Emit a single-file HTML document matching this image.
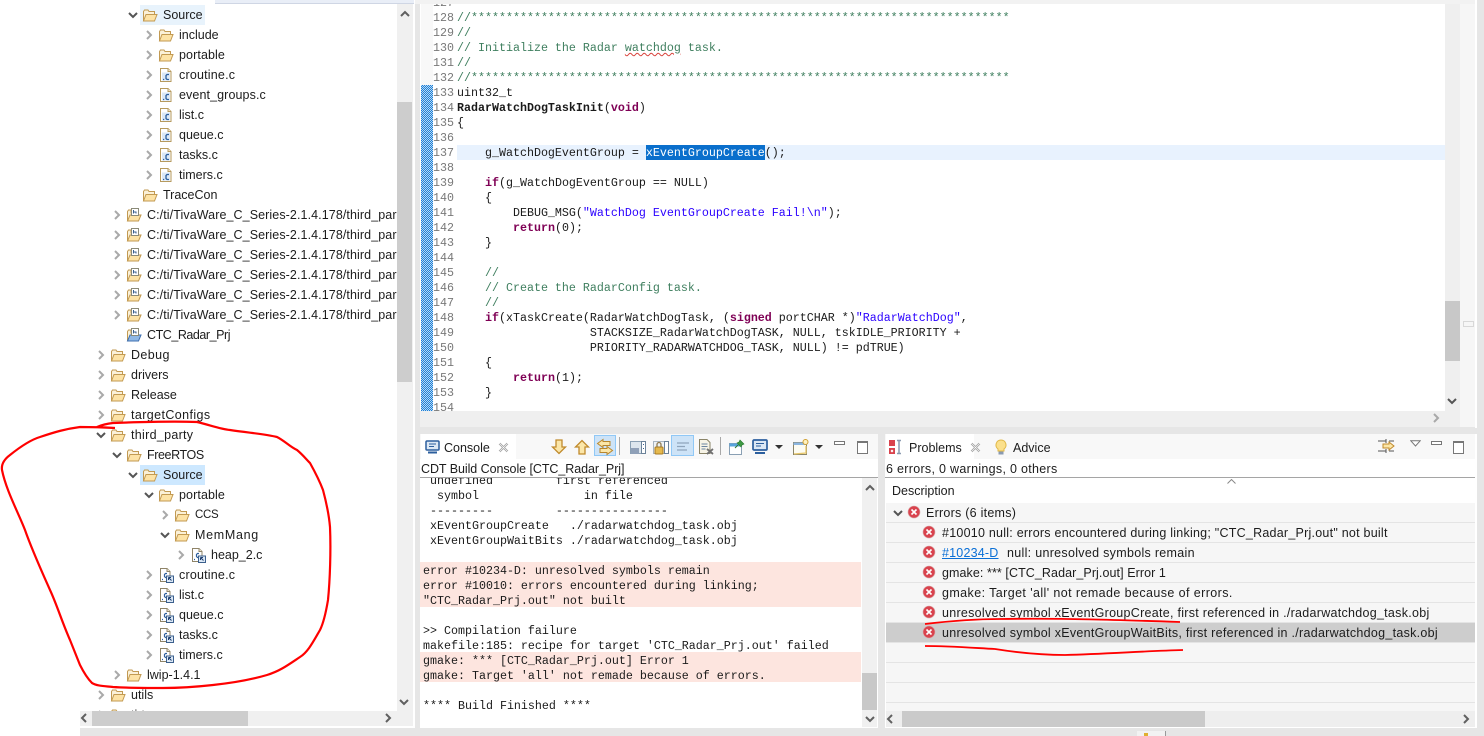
<!DOCTYPE html>
<html><head><meta charset="utf-8"><style>
html,body{margin:0;padding:0;width:1484px;height:736px;overflow:hidden;background:#fff}
body{position:relative;font-family:"Liberation Sans","Noto Sans CJK SC",sans-serif;font-size:12.5px;color:#1c1c1c}
.a{position:absolute}
.r{position:absolute;height:20px;line-height:20px;white-space:nowrap}
.r svg{position:absolute}
.r .c{left:-5px;top:5px;width:10px;height:10px}
.r .i{left:9px;top:2px;width:16px;height:16px}
.r span{position:absolute;left:30px;top:0}
pre{margin:0;font-family:"Liberation Mono",monospace;font-size:11.67px;line-height:15px;position:absolute;color:#1a1a1a}
.g{color:#3f7f5f}.k{color:#7f0055;font-weight:bold}.s{color:#2a00ff}
.row{position:absolute;left:886px;width:589px;height:20px;line-height:21px;white-space:nowrap;border-bottom:1px solid #e4e4e4;box-sizing:border-box;background:#f6f6f6}
.row svg{position:absolute;left:36px;top:2px;width:14px;height:14px}
.row span{position:absolute;left:56px;top:0}
.tb{position:absolute;width:18px;height:18px;top:438px}
.w{letter-spacing:.09px}
</style></head><body>
<svg width="0" height="0" style="position:absolute"><defs>
<symbol id="cr" viewBox="0 0 10 10"><path d="M3 1l4 4-4 4" fill="none" stroke="#a9a9a9" stroke-width="2"/></symbol>
<symbol id="cd" viewBox="0 0 10 10"><path d="M1 3l4 4 4-4" fill="none" stroke="#555" stroke-width="2"/></symbol>
<symbol id="f" viewBox="0 0 16 16"><path d="M1.500 14V4.500L2.500 3H6l1 1.500h5.500V7" fill="#fbf1d8" stroke="#c29a52"/><path d="M1.500 14L4 7.500h11L12.500 14z" fill="#fde3a6" stroke="#c29a52"/></symbol>
<symbol id="fl" viewBox="0 0 16 16"><path d="M1.500 14V4.500L2.500 3H5v3h7.500V8" fill="#fbf1d8" stroke="#c29a52"/><path d="M1.500 14L4 8h11L12.500 14z" fill="#fde3a6" stroke="#c29a52"/><rect x="5.500" y="1.500" width="7" height="7" fill="#fff" stroke="#8a8a78"/><path d="M7.500 3v3.500M7.500 5h2.500v1.500" fill="none" stroke="#3a5f8f"/></symbol>
<symbol id="p" viewBox="0 0 16 16"><path d="M1.500 14V4.500L2.500 3H5v3h7.500V8" fill="#fbf1d8" stroke="#c29a52"/><path d="M1.500 14L4 8h11L12.500 14z" fill="#8fb8e6" stroke="#3f70b0"/><rect x="5.500" y="1.500" width="7" height="7" fill="#fff" stroke="#8a8a78"/><path d="M7.500 3v3.500M7.500 5h2.500v1.500" fill="none" stroke="#3a5f8f"/></symbol>
<symbol id="c" viewBox="0 0 16 16"><path d="M2.500 1.500H10l3 3v10H2.500z" fill="#fff" stroke="#b69a5e"/><path d="M10 1.500v3h3" fill="#f4ecd6" stroke="#b69a5e"/><rect x="4" y="5.500" width="8" height="8" fill="#dbe8f6"/><path d="M5 12.500h1.200" stroke="#2c5f9e" stroke-width="1.300"/><path d="M11 7.500H9L8 8.500v3l1 1h2" fill="none" stroke="#2c5f9e" stroke-width="1.300"/></symbol>
<symbol id="cl" viewBox="0 0 16 16"><path d="M2.500 1.500H9l3 3v10H2.500z" fill="#fff" stroke="#8f8468"/><path d="M9 1.500v3h3" fill="#f4ecd6" stroke="#8f8468"/><path d="M4 12.500h1" stroke="#2c5f9e" stroke-width="1.200"/><path d="M9 6.500H7.500l-1 1v2l1 1H9" fill="none" stroke="#2c5f9e" stroke-width="1.200"/><rect x="8.500" y="9" width="7" height="6.500" fill="#dbe8f6" stroke="#3b5f8c"/><path d="M10.500 10.500l3 3M10.500 10.500h2.500M10.500 10.500V13" fill="none" stroke="#1f3f70"/></symbol>
<symbol id="e" viewBox="0 0 14 14"><circle cx="7" cy="7" r="6" fill="#d9434e" stroke="#d8a8a8" stroke-width=".6"/><path d="M4.500 4.500l5 5M9.500 4.500l-5 5" stroke="#fff" stroke-width="1.600"/></symbol>
</defs></svg>

<!-- gray workspace -->
<div class="a" style="left:80px;top:0;width:1404px;height:736px;background:#e6e6e6"></div>
<div class="a" style="left:415px;top:0;width:1062px;height:4px;background:#f2f2f2"></div>
<div class="a" style="left:1475px;top:0;width:2px;height:428px;background:#fff"></div>
<div class="a" style="left:1475px;top:434px;width:2px;height:294px;background:#fff"></div>

<!-- tree panel -->
<div class="a" style="left:80px;top:0;width:335px;height:728px;background:#fff"></div>
<div class="a" style="left:215px;top:0;width:199px;height:3px;background:#e9eef7;border-bottom:1px solid #cfd6e4"></div>
<div class="a" style="left:397px;top:4px;width:16px;height:707px;background:#f0f0f0"></div>
<div class="a" style="left:397px;top:102px;width:15px;height:280px;background:#cdcdcd"></div>
<div class="a" style="left:80px;top:711px;width:333px;height:15px;background:#f0f0f0"></div>
<div class="a" style="left:92px;top:711px;width:156px;height:15px;background:#cdcdcd"></div>
<svg class="a" style="left:79px;top:713px" width="10" height="10" viewBox="0 0 10 10"><path d="M7 1L3 5l4 4" fill="none" stroke="#606060" stroke-width="2"/></svg>
<svg class="a" style="left:383px;top:713px" width="10" height="10" viewBox="0 0 10 10"><path d="M3 1l4 4-4 4" fill="none" stroke="#606060" stroke-width="2"/></svg>
<svg class="a" style="left:400px;top:9px" width="10" height="10" viewBox="0 0 10 10"><path d="M1 7l4-4 4 4" fill="none" stroke="#606060" stroke-width="2"/></svg>
<svg class="a" style="left:399px;top:697px" width="10" height="10" viewBox="0 0 10 10"><path d="M1 3l4 4 4-4" fill="none" stroke="#606060" stroke-width="2"/></svg>

<div class="a" style="left:140px;top:5px;width:65px;height:20px;background:#e8f3fc"></div>
<div class="a" style="left:140px;top:465px;width:65px;height:20px;background:#cde8ff"></div>

<div class="a" style="left:0;top:0;width:397px;height:711px;overflow:hidden">
<div class="r" style="left:133px;top:5px"><svg class="c"><use href="#cd"/></svg><svg class="i"><use href="#f"/></svg><span>Source</span></div>
<div class="r" style="left:149px;top:25px"><svg class="c"><use href="#cr"/></svg><svg class="i"><use href="#f"/></svg><span>include</span></div>
<div class="r" style="left:149px;top:45px"><svg class="c"><use href="#cr"/></svg><svg class="i"><use href="#f"/></svg><span style="letter-spacing:.1px">portable</span></div>
<div class="r" style="left:149px;top:65px"><svg class="c"><use href="#cr"/></svg><svg class="i"><use href="#c"/></svg><span style="letter-spacing:.2px">croutine.c</span></div>
<div class="r" style="left:149px;top:85px"><svg class="c"><use href="#cr"/></svg><svg class="i"><use href="#c"/></svg><span style="letter-spacing:.1px">event_groups.c</span></div>
<div class="r" style="left:149px;top:105px"><svg class="c"><use href="#cr"/></svg><svg class="i"><use href="#c"/></svg><span>list.c</span></div>
<div class="r" style="left:149px;top:125px"><svg class="c"><use href="#cr"/></svg><svg class="i"><use href="#c"/></svg><span>queue.c</span></div>
<div class="r" style="left:149px;top:145px"><svg class="c"><use href="#cr"/></svg><svg class="i"><use href="#c"/></svg><span>tasks.c</span></div>
<div class="r" style="left:149px;top:165px"><svg class="c"><use href="#cr"/></svg><svg class="i"><use href="#c"/></svg><span>timers.c</span></div>
<div class="r" style="left:133px;top:185px"><svg class="i"><use href="#f"/></svg><span>TraceCon</span></div>
<div class="r" style="left:117px;top:205px"><svg class="c"><use href="#cr"/></svg><svg class="i"><use href="#fl"/></svg><span class="w">C:/ti/TivaWare_C_Series-2.1.4.178/third_par</span></div>
<div class="r" style="left:117px;top:225px"><svg class="c"><use href="#cr"/></svg><svg class="i"><use href="#fl"/></svg><span class="w">C:/ti/TivaWare_C_Series-2.1.4.178/third_par</span></div>
<div class="r" style="left:117px;top:245px"><svg class="c"><use href="#cr"/></svg><svg class="i"><use href="#fl"/></svg><span class="w">C:/ti/TivaWare_C_Series-2.1.4.178/third_par</span></div>
<div class="r" style="left:117px;top:265px"><svg class="c"><use href="#cr"/></svg><svg class="i"><use href="#fl"/></svg><span class="w">C:/ti/TivaWare_C_Series-2.1.4.178/third_par</span></div>
<div class="r" style="left:117px;top:285px"><svg class="c"><use href="#cr"/></svg><svg class="i"><use href="#fl"/></svg><span class="w">C:/ti/TivaWare_C_Series-2.1.4.178/third_par</span></div>
<div class="r" style="left:117px;top:305px"><svg class="c"><use href="#cr"/></svg><svg class="i"><use href="#fl"/></svg><span class="w">C:/ti/TivaWare_C_Series-2.1.4.178/third_par</span></div>
<div class="r" style="left:117px;top:325px"><svg class="i"><use href="#p"/></svg><span style="letter-spacing:-.45px">CTC_Radar_Prj</span></div>
<div class="r" style="left:101px;top:345px"><svg class="c"><use href="#cr"/></svg><svg class="i"><use href="#f"/></svg><span style="letter-spacing:.4px">Debug</span></div>
<div class="r" style="left:101px;top:365px"><svg class="c"><use href="#cr"/></svg><svg class="i"><use href="#f"/></svg><span>drivers</span></div>
<div class="r" style="left:101px;top:385px"><svg class="c"><use href="#cr"/></svg><svg class="i"><use href="#f"/></svg><span>Release</span></div>
<div class="r" style="left:101px;top:405px"><svg class="c"><use href="#cr"/></svg><svg class="i"><use href="#f"/></svg><span style="letter-spacing:.4px">targetConfigs</span></div>
<div class="r" style="left:101px;top:425px"><svg class="c"><use href="#cd"/></svg><svg class="i"><use href="#f"/></svg><span style="letter-spacing:.3px">third_party</span></div>
<div class="r" style="left:117px;top:445px"><svg class="c"><use href="#cd"/></svg><svg class="i"><use href="#f"/></svg><span style="letter-spacing:-.4px">FreeRTOS</span></div>
<div class="r" style="left:133px;top:465px"><svg class="c"><use href="#cd"/></svg><svg class="i"><use href="#f"/></svg><span>Source</span></div>
<div class="r" style="left:149px;top:485px"><svg class="c"><use href="#cd"/></svg><svg class="i"><use href="#f"/></svg><span style="letter-spacing:.1px">portable</span></div>
<div class="r" style="left:165px;top:505px"><svg class="c"><use href="#cr"/></svg><svg class="i"><use href="#f"/></svg><span style="font-size:11.5px;letter-spacing:-.3px">CCS</span></div>
<div class="r" style="left:165px;top:525px"><svg class="c"><use href="#cd"/></svg><svg class="i"><use href="#f"/></svg><span style="letter-spacing:.7px">MemMang</span></div>
<div class="r" style="left:181px;top:545px"><svg class="c"><use href="#cr"/></svg><svg class="i"><use href="#cl"/></svg><span>heap_2.c</span></div>
<div class="r" style="left:149px;top:565px"><svg class="c"><use href="#cr"/></svg><svg class="i"><use href="#cl"/></svg><span style="letter-spacing:.2px">croutine.c</span></div>
<div class="r" style="left:149px;top:585px"><svg class="c"><use href="#cr"/></svg><svg class="i"><use href="#cl"/></svg><span>list.c</span></div>
<div class="r" style="left:149px;top:605px"><svg class="c"><use href="#cr"/></svg><svg class="i"><use href="#cl"/></svg><span>queue.c</span></div>
<div class="r" style="left:149px;top:625px"><svg class="c"><use href="#cr"/></svg><svg class="i"><use href="#cl"/></svg><span>tasks.c</span></div>
<div class="r" style="left:149px;top:645px"><svg class="c"><use href="#cr"/></svg><svg class="i"><use href="#cl"/></svg><span>timers.c</span></div>
<div class="r" style="left:117px;top:665px"><svg class="c"><use href="#cr"/></svg><svg class="i"><use href="#f"/></svg><span>lwip-1.4.1</span></div>
<div class="r" style="left:101px;top:685px"><svg class="c"><use href="#cr"/></svg><svg class="i"><use href="#f"/></svg><span>utils</span></div>
<div class="r" style="left:101px;top:705px"><svg class="c"><use href="#cr"/></svg><svg class="i"><use href="#f"/></svg><span>tirtos</span></div>
</div>

<!-- editor -->
<div class="a" style="left:420px;top:4px;width:1055px;height:423px;background:#fff"></div>
<div class="a" style="left:421px;top:4px;width:12px;height:81px;background:#f8f8f8"></div>
<div class="a" style="left:1460px;top:4px;width:15px;height:423px;background:#f6f6f6"></div>
<div class="a" style="left:1445px;top:4px;width:15px;height:423px;background:#efefef"></div>
<div class="a" style="left:420px;top:411px;width:1040px;height:16px;background:#efefef"></div>
<div class="a" style="left:1445px;top:301px;width:15px;height:60px;background:#c8c8c8"></div>
<div class="a" style="left:1463px;top:321px;width:9px;height:4px;border:1px solid #d8d8d8"></div>
<svg class="a" style="left:1447px;top:396px" width="10" height="10" viewBox="0 0 10 10"><path d="M1 3l4 4 4-4" fill="none" stroke="#555" stroke-width="2"/></svg>
<svg class="a" style="left:1431px;top:413px" width="10" height="10" viewBox="0 0 10 10"><path d="M3 1l4 4-4 4" fill="none" stroke="#a9a9a9" stroke-width="2"/></svg>
<div class="a" style="left:421px;top:85px;width:12px;height:326px;background-image:repeating-conic-gradient(#1f7fd6 0 25%,#b8daf5 0 50%);background-size:2px 2px"></div>
<div class="a" style="left:457px;top:145px;width:988px;height:15px;background:#e8f2fe"></div>
<div class="a" style="left:646px;top:145px;width:119px;height:15px;background:#0a6fcc"></div>
<div class="a" style="left:433px;top:4px;width:1012px;height:407px;overflow:hidden">
<pre style="left:0;top:-8px;color:#787878">127
128
129
130
131
132
133
134
135
136
137
138
139
140
141
142
143
144
145
146
147
148
149
150
151
152
153
154</pre>
<pre style="left:24px;top:7px"><span class="g">//*****************************************************************************</span>
<span class="g">//</span>
<span class="g">// Initialize the Radar <span style="text-decoration:underline wavy #d8413a 1px">watchdog</span> task.</span>
<span class="g">//</span>
<span class="g">//*****************************************************************************</span>
uint32_t
<b>RadarWatchDogTaskInit</b>(<span class="k">void</span>)
{

    g_WatchDogEventGroup = <span style="color:#fff">xEventGroupCreate</span>();

    <span class="k">if</span>(g_WatchDogEventGroup == NULL)
    {
        DEBUG_MSG(<span class="s">"WatchDog EventGroupCreate Fail!\n"</span>);
        <span class="k">return</span>(0);
    }

    <span class="g">//</span>
    <span class="g">// Create the RadarConfig task.</span>
    <span class="g">//</span>
    <span class="k">if</span>(xTaskCreate(RadarWatchDogTask, (<span class="k">signed</span> portCHAR *)<span class="s">"RadarWatchDog"</span>,
                   STACKSIZE_RadarWatchDogTASK, NULL, tskIDLE_PRIORITY +
                   PRIORITY_RADARWATCHDOG_TASK, NULL) != pdTRUE)
    {
        <span class="k">return</span>(1);
    }
</pre>
</div>

<!-- console panel -->
<div class="a" style="left:420px;top:434px;width:458px;height:294px;background:#fff"></div>
<div class="a" style="left:420px;top:434px;width:458px;height:25px;background:#f8f8f8"></div>
<div class="a" style="left:421px;top:434px;width:95px;height:25px;background:#fff"></div>
<svg class="a" style="left:425px;top:440px" width="16" height="14" viewBox="0 0 16 14"><rect x="1" y="1" width="13" height="9" rx="1" fill="#dce8f5" stroke="#2c5f9e" stroke-width="1.500"/><path d="M4 4h7M4 6.500h5" stroke="#2c5f9e"/><path d="M3 12.500h9" stroke="#2c5f9e" stroke-width="2"/></svg>
<div class="r" style="left:444px;top:438px"><span style="left:0">Console</span></div>
<svg class="a" style="left:498px;top:442px" width="11" height="11" viewBox="0 0 11 11"><path d="M1.500 1.500l8 8M9.500 1.500l-8 8" stroke="#999" stroke-width="2.200"/><path d="M1.500 1.500l8 8M9.500 1.500l-8 8" stroke="#fff" stroke-width=".7"/></svg>

<div class="a" style="left:594px;top:435px;width:22px;height:21px;background:#cde3f7;border:1px solid #90c8f6;box-sizing:border-box"></div>
<div class="a" style="left:671px;top:435px;width:23px;height:21px;background:#cde3f7;border:1px solid #90c8f6;box-sizing:border-box"></div>
<div class="a" style="left:619px;top:437px;width:1px;height:18px;background:#a8a8a8"></div>
<div class="a" style="left:720px;top:437px;width:1px;height:18px;background:#a8a8a8"></div>
<svg class="tb" style="left:550px" viewBox="0 0 18 18"><path d="M6 2h6v7h3.500L9 15.500 2.500 9H6z" fill="#fbe6a8" stroke="#c08a2c" stroke-width="1.300"/></svg>
<svg class="tb" style="left:573px" viewBox="0 0 18 18"><path d="M6 16h6V9h3.500L9 2.500 2.500 9H6z" fill="#fbe6a8" stroke="#c08a2c" stroke-width="1.300"/></svg>
<svg class="tb" style="left:596px" viewBox="0 0 18 18"><path d="M7 1.500L1.500 5.500 7 9.500V7.500h7v-4H7z" fill="#fbe6a8" stroke="#b8862c"/><path d="M11 8.500l5.500 4-5.500 4v-2H4v-4h7z" fill="#fbe6a8" stroke="#b8862c"/></svg>
<svg class="tb" style="left:629px" viewBox="0 0 18 18"><rect x="1.500" y="3.500" width="11" height="12" fill="#dde6ee" stroke="#8aa0b4"/><rect x="12.500" y="3.500" width="4" height="12" fill="#fff" stroke="#6b8299"/><rect x="2" y="10" width="8" height="6" fill="#8fa0b8"/><path d="M14.500 6v1M14.500 10v1" stroke="#3a5f8f"/></svg>
<svg class="tb" style="left:652px" viewBox="0 0 18 18"><rect x="1.500" y="3.500" width="11" height="12" fill="#eef2f5" stroke="#a8b4c0"/><rect x="12.500" y="3.500" width="4" height="12" fill="#fff" stroke="#6b8299"/><rect x="3" y="9" width="8" height="7" rx="1" fill="#e5b94e" stroke="#a97a20"/><path d="M5 9V6.500a2 2 0 014 0V9" fill="none" stroke="#8f7a50" stroke-width="1.300"/></svg>
<svg class="tb" style="left:674px" viewBox="0 0 18 18"><path d="M3 5h12M3 8.500h8M3 12h10" stroke="#8ea4bb" stroke-width="1.200"/></svg>
<svg class="tb" style="left:697px" viewBox="0 0 18 18"><path d="M2.500 1.500H10l3 3v11H2.500z" fill="#f6f3e6" stroke="#8a8468"/><path d="M4.500 6h6M4.500 8.500h6M4.500 11h4" stroke="#6b84a0"/><path d="M10 11l6 5M16 11l-6 5" stroke="#707070" stroke-width="1.800"/></svg>
<svg class="tb" style="left:728px" viewBox="0 0 18 18"><rect x="1.500" y="5.500" width="12" height="11" fill="#fff" stroke="#8aa0b4"/><rect x="1.500" y="5.500" width="12" height="3" fill="#58a4dc"/><path d="M12 2l4 4-2 1-1 2-4-4 2-1z" fill="#3f9a44" stroke="#2a7a30" stroke-width=".6"/><path d="M10 7l-3 3" stroke="#2a7a30"/></svg>
<svg class="tb" style="left:751px" viewBox="0 0 18 18"><rect x="2" y="2" width="14" height="10" rx="1" fill="#dce8f5" stroke="#2c5f9e" stroke-width="1.700"/><path d="M5 5.500h8M5 8h5" stroke="#2c5f9e"/><path d="M4 15h10" stroke="#2c5f9e" stroke-width="2"/></svg>
<svg class="a" style="left:775px;top:445px" width="8" height="4" viewBox="0 0 8 4"><path d="M0 0h8L4 4z" fill="#333"/></svg>
<svg class="tb" style="left:792px" viewBox="0 0 18 18"><rect x="1.500" y="4.500" width="13" height="12" fill="#fdfcf2" stroke="#8a8468"/><rect x="1.500" y="4.500" width="13" height="2.500" fill="#8cb6e0"/><path d="M2 16l12-1V8" fill="none" stroke="#e8c76a" stroke-width="1.300"/><circle cx="13.500" cy="4" r="2.500" fill="#fff2c0" stroke="#d0a030"/></svg>
<svg class="a" style="left:815px;top:445px" width="8" height="4" viewBox="0 0 8 4"><path d="M0 0h8L4 4z" fill="#333"/></svg>
<div class="a" style="left:834px;top:441px;width:9px;height:2px;border:1px solid #777;background:#fff"></div>
<div class="a" style="left:857px;top:441px;width:9px;height:10px;border:1px solid #777;border-top-width:2px;background:#fff"></div>

<div class="r" style="left:421px;top:459px;height:18px;line-height:21px"><span style="left:0;letter-spacing:-.06px">CDT Build Console [CTC_Radar_Prj]</span></div>
<div class="a" style="left:420px;top:477px;width:458px;height:1px;background:#a5a5a5"></div>

<div class="a" style="left:420px;top:562px;width:441px;height:45px;background:#fde5df"></div>
<div class="a" style="left:420px;top:652px;width:441px;height:30px;background:#fde5df"></div>
<div class="a" style="left:423px;top:478px;width:438px;height:249px;overflow:hidden">
<pre style="left:0;top:-4px"> undefined         first referenced
  symbol               in file
 ---------         ----------------
 xEventGroupCreate   ./radarwatchdog_task.obj
 xEventGroupWaitBits ./radarwatchdog_task.obj

error #10234-D: unresolved symbols remain
error #10010: errors encountered during linking;
"CTC_Radar_Prj.out" not built

&gt;&gt; Compilation failure
makefile:185: recipe for target 'CTC_Radar_Prj.out' failed
gmake: *** [CTC_Radar_Prj.out] Error 1
gmake: Target 'all' not remade because of errors.

**** Build Finished ****</pre>
</div>
<div class="a" style="left:862px;top:478px;width:15px;height:249px;background:#f0f0f0"></div>
<div class="a" style="left:862px;top:673px;width:15px;height:37px;background:#c8c8c8"></div>
<svg class="a" style="left:865px;top:483px" width="10" height="10" viewBox="0 0 10 10"><path d="M1 7l4-4 4 4" fill="none" stroke="#606060" stroke-width="2"/></svg>
<svg class="a" style="left:865px;top:714px" width="10" height="10" viewBox="0 0 10 10"><path d="M1 3l4 4 4-4" fill="none" stroke="#606060" stroke-width="2"/></svg>

<!-- problems panel -->
<div class="a" style="left:885px;top:434px;width:590px;height:294px;background:#fff"></div>
<div class="a" style="left:885px;top:434px;width:590px;height:25px;background:#f8f8f8"></div>
<div class="a" style="left:886px;top:434px;width:88px;height:25px;background:#fff"></div>
<svg class="a" style="left:888px;top:439px" width="16" height="16" viewBox="0 0 16 16"><rect x="1" y="1" width="6" height="6" fill="#d9434e"/><rect x="1" y="9" width="6" height="6" fill="#d9434e"/><path d="M3 11l2 2M5 11l-2 2" stroke="#fff"/><path d="M9 1.500h4M11 1.500v13M9 14.500h4" stroke="#8a9ab0" stroke-width="1.500"/></svg>
<div class="r" style="left:909px;top:438px"><span style="left:0">Problems</span></div>
<svg class="a" style="left:970px;top:442px" width="11" height="11" viewBox="0 0 11 11"><path d="M1.500 1.500l8 8M9.500 1.500l-8 8" stroke="#999" stroke-width="2.200"/><path d="M1.500 1.500l8 8M9.500 1.500l-8 8" stroke="#fff" stroke-width=".7"/></svg>
<svg class="a" style="left:993px;top:439px" width="16" height="17" viewBox="0 0 16 17"><path d="M8 1a5 5 0 00-3 9v2h6v-2a5 5 0 00-3-9z" fill="#fbe08c" stroke="#e0b848"/><rect x="5.500" y="12.500" width="5" height="3" fill="#8a9ab0"/></svg>
<div class="r" style="left:1013px;top:438px"><span style="left:0">Advice</span></div>
<svg class="tb" style="left:1377px;top:437px" viewBox="0 0 18 18"><path d="M1 4h8M1 14h8M12 4h5M12 14h5M9 2v4M9 12v4" stroke="#555"/><path d="M6 7h6V5l5 4-5 4v-2H6z" fill="#fbe6a8" stroke="#c08a2c"/></svg>
<svg class="a" style="left:1410px;top:440px" width="11" height="7" viewBox="0 0 11 7"><path d="M.7.700h9.600L5.500 6z" fill="#fff" stroke="#777"/></svg>
<div class="a" style="left:1431px;top:441px;width:9px;height:2px;border:1px solid #777;background:#fff"></div>
<div class="a" style="left:1453px;top:441px;width:9px;height:10px;border:1px solid #777;border-top-width:2px;background:#fff"></div>

<div class="r" style="left:886px;top:459px;height:18px;line-height:21px"><span style="left:0;letter-spacing:.3px">6 errors, 0 warnings, 0 others</span></div>
<div class="a" style="left:885px;top:477px;width:590px;height:1px;background:#a5a5a5"></div>
<div class="r" style="left:892px;top:481px"><span style="left:0">Description</span></div>
<svg class="a" style="left:1227px;top:479px" width="9" height="5" viewBox="0 0 9 5"><path d="M.5 4.500l4-4 4 4" fill="none" stroke="#888"/></svg>

<div class="row" style="top:503px"><svg style="left:7px;top:5px;width:10px;height:10px"><use href="#cd"/></svg><svg style="left:21px;top:2px"><use href="#e"/></svg><span style="left:40px;letter-spacing:.25px">Errors (6 items)</span></div>
<div class="row" style="top:523px"><svg><use href="#e"/></svg><span style="letter-spacing:.24px">#10010 null: errors encountered during linking; "CTC_Radar_Prj.out" not built</span></div>
<div class="row" style="top:543px"><svg><use href="#e"/></svg><span><u style="color:#0a6fd6;letter-spacing:.2px">#10234-D</u><span style="left:65px;letter-spacing:.3px">null: unresolved symbols remain</span></span></div>
<div class="row" style="top:563px"><svg><use href="#e"/></svg><span style="letter-spacing:.08px">gmake: *** [CTC_Radar_Prj.out] Error 1</span></div>
<div class="row" style="top:583px"><svg><use href="#e"/></svg><span style="letter-spacing:.41px">gmake: Target 'all' not remade because of errors.</span></div>
<div class="row" style="top:603px"><svg><use href="#e"/></svg><span style="letter-spacing:.28px">unresolved symbol xEventGroupCreate, first referenced in ./radarwatchdog_task.obj</span></div>
<div class="row" style="top:623px;background:#cdcdcd"><svg><use href="#e"/></svg><span style="letter-spacing:.28px">unresolved symbol xEventGroupWaitBits, first referenced in ./radarwatchdog_task.obj</span></div>
<div class="row" style="top:643px"></div>
<div class="row" style="top:663px"></div>
<div class="row" style="top:683px;height:20px"></div>
<div class="a" style="left:886px;top:703px;width:589px;height:8px;background:#f6f6f6"></div>
<div class="a" style="left:886px;top:711px;width:589px;height:16px;background:#eeeeee"></div>
<div class="a" style="left:902px;top:711px;width:303px;height:16px;background:#cacaca"></div>
<svg class="a" style="left:885px;top:714px" width="10" height="10" viewBox="0 0 10 10"><path d="M7 1L3 5l4 4" fill="none" stroke="#606060" stroke-width="2"/></svg>
<svg class="a" style="left:1461px;top:714px" width="10" height="10" viewBox="0 0 10 10"><path d="M3 1l4 4-4 4" fill="none" stroke="#606060" stroke-width="2"/></svg>

<!-- status bar bits -->
<div class="a" style="left:1137px;top:731px;width:28px;height:5px;background:#f2f2f2;border-right:1px solid #999"></div>
<div class="a" style="left:1144px;top:733px;width:4px;height:3px;background:#e0b030"></div>

<!-- red annotations -->
<svg class="a" style="left:0;top:0;pointer-events:none" width="1484" height="736" viewBox="0 0 1484 736">
<path d="M115 428L97 427Q104 424 113 423C140 422 170 421 197 422C210 425 220 429 230 430C250 433 265 434 277 437C285 441 290 447 297 450C303 455 306 459 310 463C315 472 320 482 323 490C327 505 329 515 330 527C331 550 330 580 328 600C326 612 324 622 320 630C313 642 308 652 300 657C288 665 280 671 267 675C250 680 232 683 213 685C195 687 180 688 163 688C145 688 128 688 113 687C104 686 97 686 92 683C87 678 83 671 80 665L70 640C62 622 57 605 50 590C42 572 32 550 25 530C18 512 6 490 2 470C1 463 6 458 10 455C20 447 30 440 40 437C55 432 65 429 80 427Q98 427 115 428" fill="none" stroke="#f00" stroke-width="2.200"/>
<path d="M925 624C950 621 975 619 1000 619C1060 618 1120 620 1180 622" fill="none" stroke="#f00" stroke-width="1.800"/>
<path d="M925 646C950 646 975 648 995 649C1020 653 1045 655 1065 655C1105 654 1145 651 1183 650" fill="none" stroke="#f00" stroke-width="1.800"/>
</svg>
</body></html>
